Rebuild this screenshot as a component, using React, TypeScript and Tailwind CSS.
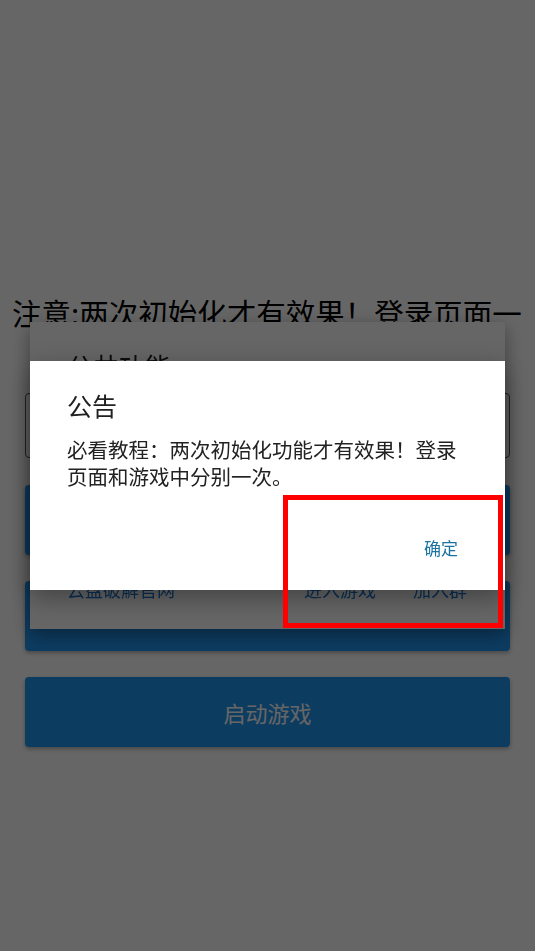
const font = "font-['Noto_Sans_CJK_SC','Noto_Sans',sans-serif]";

function BlueButton({ label }: { label?: string }) {
  return (
    <div className="mx-[13px] flex h-[70px] items-center justify-center rounded-[4px] bg-[#2196F3] text-[22px] leading-none text-white shadow-[0_2px_4px_rgba(0,0,0,0.3)]">
      {label}
    </div>
  );
}

// the popup that sits under the announcement's scrim
function FeatureCard() {
  return (
    <div className="fixed inset-0 flex items-center justify-center">
      <div className="flex h-[307px] w-[475px] flex-col justify-between bg-white px-[37px] pt-[31px] pb-[31px] shadow-[0_6px_18px_rgba(0,0,0,0.4)]">
        <div className="text-[26px] leading-none text-[#222]">公共功能</div>
        <div className="flex items-center justify-between pr-px text-[18px] leading-none text-[#1976D2]">
          <span>云盘破解官网</span>
          <div className="flex gap-[37px]">
            <span>进入游戏</span>
            <span>加入群</span>
          </div>
        </div>
      </div>
    </div>
  );
}

function NoticeDialog() {
  return (
    <div className="fixed inset-0 flex items-center justify-center bg-black/60">
      <div className="relative flex h-[229px] w-[475px] flex-col bg-white pt-[32px] shadow-[0_8px_24px_rgba(0,0,0,0.35)]">
        <div className="px-[37px] text-[25px] leading-none text-[#212121]">公告</div>
        <p className="mt-[18px] px-[37px] text-[20.5px] leading-[27px] text-[#222]">
          必看教程：两次初始化功能才有效果！登录页面和游戏中分别一次。
        </p>
        <div className="mt-[49px] flex justify-end pr-[47px]">
          <button className="text-[17px] leading-none text-[#1a73a0]">确定</button>
        </div>
      </div>
    </div>
  );
}

export default function App() {
  return (
    <div className={`relative h-[951px] w-[535px] overflow-hidden bg-white ${font}`}>
      <div className="flex flex-col px-3 pt-[294px]">
        <div className="h-[72px] text-[29.5px] leading-[36px] text-black">
          <div className="whitespace-nowrap">注意:两次初始化才有效果！登录页面一</div>
        </div>
        <div className="mx-[13px] mt-[27px] h-[65px] rounded-[4px] border border-[#555] bg-white" />
        <div className="mt-[27px] flex flex-col gap-[26px]">
          <BlueButton label="初始化" />
          <BlueButton label="卡密登录" />
          <BlueButton label="启动游戏" />
        </div>
      </div>

      <FeatureCard />
      <NoticeDialog />

      {/* red annotation box */}
      <div className="pointer-events-none fixed left-[283px] top-[495px] h-[133px] w-[220px] border-[5px] border-[#ff0000]" />
    </div>
  );
}
